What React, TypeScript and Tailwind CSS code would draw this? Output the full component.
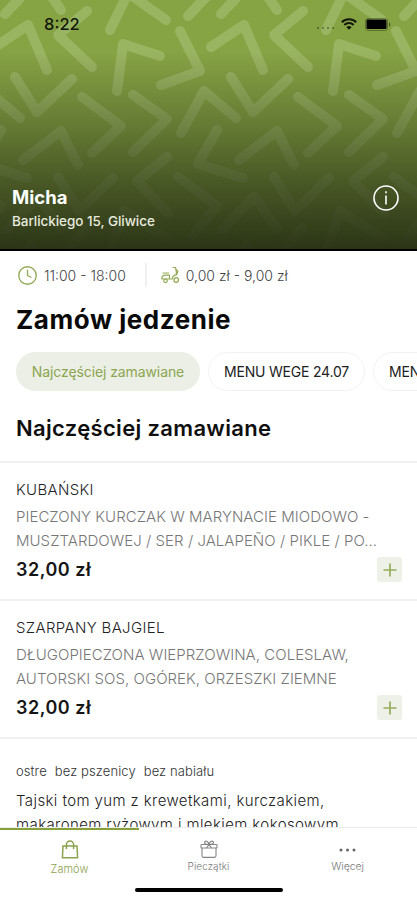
import { Clock } from "lucide-react";

type MenuItem = {
  name: string;
  lines: string[];
  price: string;
};

const items: MenuItem[] = [
  {
    name: "KUBAŃSKI",
    lines: ["PIECZONY KURCZAK W MARYNACIE MIODOWO -", "MUSZTARDOWEJ / SER / JALAPEÑO / PIKLE / PO..."],
    price: "32,00 zł",
  },
  {
    name: "SZARPANY BAJGIEL",
    lines: ["DŁUGOPIECZONA WIEPRZOWINA, COLESLAW,", "AUTORSKI SOS, OGÓREK, ORZESZKI ZIEMNE"],
    price: "32,00 zł",
  },
];

// One tile of the chevron pattern, repeated every 216px
const chevrons = [
  "5,14 20,-2",
  "50,-6 61,10",
  "-5,47 28,25 47,70",
  "87,11 58,35 92,67",
  "110,30 128,-7 166,20",
  "188,16 207,-4",
  "180,31 200,71 161,85",
  "117,91 123,44 160,56",
  "15,77 37,112 72,79",
  "181,133 204,91 236,118",
  "1,130 -18,164 27,178",
  "178,177 217,206 193,235",
  "23,160 61,131 78,165",
  "82,97 121,126 92,153",
  "133,95 167,119 133,152",
  "167,157 137,181 168,213",
  "58,177 79,211 113,178",
  "6,230 38,197 61,228",
  "111,250 124,211 166,238",
  "86,228 68,250",
  "22,256 31,244",
];

function Pattern() {
  return (
    <svg
      className="absolute inset-0 mask-b-from-30% mask-b-to-130%"
      width="417"
      height="250"
      viewBox="0 0 417 250"
      fill="none"
    >
      <g stroke="#b2c984" strokeOpacity="0.45" strokeWidth="10" strokeLinecap="round" strokeLinejoin="round">
        {[-216, 0, 216].map((dx) => (
          <g key={dx} transform={`translate(${dx} 0)`}>
            {chevrons.map((points) => (
              <polyline key={points} points={points} />
            ))}
          </g>
        ))}
      </g>
    </svg>
  );
}

function StatusBar() {
  return (
    <div className="relative flex h-12 items-center justify-between pl-11 pr-[26px] text-[#14180c]">
      <span className="text-[16.5px] font-medium leading-none">8:22</span>
      <div className="flex items-center">
        <div className="mr-[7px] mt-2 flex gap-[3px] opacity-40">
          {[0, 1, 2, 3].map((n) => (
            <span key={n} className="size-[2px] rounded-full bg-black" />
          ))}
        </div>
        <svg width="16" height="12" viewBox="0 0 16 12" fill="none" stroke="currentColor" strokeWidth="2">
          <path d="M.8 4.2a10.3 10.3 0 0 1 14.4 0M3.3 7a6.8 6.8 0 0 1 9.4 0" />
          <path d="M5.4 9.2a3.8 3.8 0 0 1 5.2 0L8 11.8z" fill="currentColor" stroke="none" />
        </svg>
        <svg className="ml-2" width="26" height="13" viewBox="0 0 26 13">
          <rect x="0.5" y="0.5" width="22" height="12" rx="2.5" fill="none" stroke="currentColor" strokeOpacity="0.35" />
          <rect x="1.5" y="1.5" width="20" height="9.5" rx="1.2" fill="black" />
          <path d="M24 4.2c1.7.6 1.7 4 0 4.6z" fill="currentColor" fillOpacity="0.55" />
        </svg>
      </div>
    </div>
  );
}

function Hero() {
  return (
    <header className="relative h-[251px] shrink-0 overflow-hidden border-b-2 border-black bg-[#87a445]">
      <Pattern />
      <div className="absolute inset-0 bg-[linear-gradient(to_bottom,transparent_20%,rgb(0_0_0/0.25)_50%,rgb(0_0_0/0.48)_75%,rgb(0_0_0/0.68))]" />
      <StatusBar />
      <div className="relative mt-[136px] flex items-start justify-between pl-3 pr-[18px] text-white">
        <div>
          <h1 className="text-[18.5px] font-bold leading-[26px]">Micha</h1>
          <p className="text-[13.5px] font-medium leading-[22px] tracking-[-0.05px] text-[#e7eadf]">
            Barlickiego 15, Gliwice
          </p>
        </div>
        <svg className="mt-px" width="26" height="26" viewBox="0 0 26 26" fill="none" stroke="white" strokeWidth="1.6">
          <circle cx="13" cy="13" r="12" />
          <path d="M13 10.5v9M13 6.2v2" />
        </svg>
      </div>
    </header>
  );
}

function ScooterIcon() {
  return (
    <svg width="19" height="18" viewBox="0 0 19 18" fill="none" stroke="#91aa55" strokeWidth="1.2" strokeLinecap="round" strokeLinejoin="round">
      <path d="M2 7h5.5M.8 13c0-2.4 1.5-3.8 3.7-3.8h4V13h2.7c.2-2.5 2.2-4 4.6-4.3L14.6 1.5h-2.4M.8 13h7.7" />
      <path d="M15 3.8c2.6.2 2.4 3.4.2 3.6" />
      <circle cx="4.5" cy="14.8" r="1.8" />
      <circle cx="15.2" cy="14" r="2.3" />
    </svg>
  );
}

function PlusButton() {
  return (
    <button className="flex h-[25px] w-[25px] items-center justify-center rounded-[3px] bg-[#edf1e7]">
      <svg width="14" height="14" viewBox="0 0 14 14" stroke="#96ad5c" strokeWidth="1.7">
        <path d="M7 .5v13M.5 7h13" />
      </svg>
    </button>
  );
}

function MenuRow({ item }: { item: MenuItem }) {
  return (
    <article className="h-[138px] border-t-2 border-[#f1f1f1] pl-4 pr-[15px] pt-[15px]">
      <h3 className="text-[15px] font-light leading-6 tracking-[0.35px] text-[#222]">{item.name}</h3>
      <div className="mt-[3px] whitespace-nowrap text-[15px] font-light leading-[23.5px] tracking-[0.04px] text-[#777]">
        {item.lines.map((line) => (
          <p key={line}>{line}</p>
        ))}
      </div>
      <div className="mt-[5px] flex items-center justify-between">
        <span className="text-[18px] font-semibold leading-6 tracking-[0.5px] text-[#151515]">{item.price}</span>
        <PlusButton />
      </div>
    </article>
  );
}

function TabBar() {
  return (
    <nav className="relative h-[73px] shrink-0 border-t border-[#ececec] bg-white">
      <div className="absolute top-0 left-0 h-[2px] w-[139px] bg-[#86a13a]" />
      <div className="grid grid-cols-3 text-[11px] font-light leading-[14px] text-[#777]">
        <div className="flex flex-col items-center pt-[12px] text-[#8ba34e]">
          <svg width="18" height="19" viewBox="0 0 18 19" fill="none" stroke="currentColor" strokeWidth="1.5">
            <path d="M2 6h14l.6 11.7H1.400z" />
            <path d="M5.4 9V4.500a3.600 3.600 0 0 1 7.200 0V9" />
          </svg>
          <span className="mt-[3px]">Zamów</span>
        </div>
        <div className="flex flex-col items-center pt-[12px]">
          <svg width="18" height="19" viewBox="0 0 18 19" fill="none" stroke="#858585" strokeWidth="1.1">
            <rect x="1" y="4.5" width="16" height="3.5" rx="0.7" />
            <path d="M2 8v7.800c0 1 .6 1.600 1.600 1.600h10.800c1 0 1.600-.6 1.600-1.600V8" />
            <path d="M9 4.500C4.800 4.500 4 2.900 4.800 1.800 6 .3 8.400 1.500 9 4.500c.6-3 3-4.200 4.200-2.700.8 1.100 0 2.700-4.200 2.700zM9 4.500 6.500 7.800M9 4.500l2.500 3.300" />
          </svg>
          <span className="mt-px text-[10px] leading-[13px] tracking-[0.05px]">Pieczątki</span>
        </div>
        <div className="flex flex-col items-center pt-[20px]">
          <svg width="17" height="4" viewBox="0 0 17 4" fill="#666">
            <circle cx="2" cy="2" r="1.5" />
            <circle cx="8.5" cy="2" r="1.5" />
            <circle cx="15" cy="2" r="1.5" />
          </svg>
          <span className="mt-[8px] text-[10.5px] tracking-[-0.1px]">Więcej</span>
        </div>
      </div>
      <div className="absolute bottom-[8px] left-[135px] h-1 w-[148px] rounded-full bg-black" />
    </nav>
  );
}

export default function App() {
  return (
    <main className="flex h-[900px] w-[417px] flex-col overflow-hidden bg-white font-['Inter',sans-serif]">
      <Hero />

      <div className="min-h-0 flex-1 overflow-hidden">
        <div className="flex h-12 items-center pl-[17px] text-[14px] font-light text-[#444]">
          <Clock size={21} strokeWidth={1.5} className="text-[#91aa55]" />
          <span className="ml-[6px]">11:00 - 18:00</span>
          <span className="ml-[19px] mr-[14px] h-6 w-[2px] bg-[#f0f0f0]" />
          <ScooterIcon />
          <span className="ml-[6px]">0,00 zł - 9,00 zł</span>
        </div>

        <h2 className="pl-4 pt-px text-[26px] font-bold leading-10 tracking-[0.55px] text-[#0a0a0a]">Zamów jedzenie</h2>

        <div className="mt-[12px] flex gap-2 whitespace-nowrap pl-4 text-[14px]">
          <button className="h-[39px] w-[184px] shrink-0 rounded-full bg-[#ebefe6] tracking-[-0.1px] text-[#8da551]">
            Najczęściej zamawiane
          </button>
          <button className="h-[39px] w-[157px] shrink-0 rounded-full border-[1.5px] border-[#f3f3f3] tracking-[-0.2px] text-[#222]">
            MENU WEGE 24.07
          </button>
          <button className="h-[39px] w-[157px] shrink-0 rounded-full border-[1.5px] border-[#f3f3f3] pl-[15px] text-left tracking-[-0.2px] text-[#222]">
            MENU WEGE 25.07
          </button>
        </div>

        <h2 className="mb-[17px] mt-[21px] pl-4 text-[22px] font-semibold leading-8 tracking-[0.33px] text-[#0f0f0f]">
          Najczęściej zamawiane
        </h2>

        {items.map((item) => (
          <MenuRow key={item.name} item={item} />
        ))}

        <article className="border-t-2 border-[#f1f1f1] pl-4 pt-[22px]">
          <div className="flex gap-2 text-[13px] font-light leading-5 tracking-[0.1px] text-[#333]">
            <span>ostre</span>
            <span>bez pszenicy</span>
            <span>bez nabiału</span>
          </div>
          <p className="mt-[8px] whitespace-nowrap text-[15px] font-light leading-[23.5px] tracking-[0.4px] text-[#222]">
            Tajski tom yum z krewetkami, kurczakiem,
            <br />
            makaronem ryżowym i mlekiem kokosowym
          </p>
        </article>
      </div>

      <TabBar />
    </main>
  );
}
